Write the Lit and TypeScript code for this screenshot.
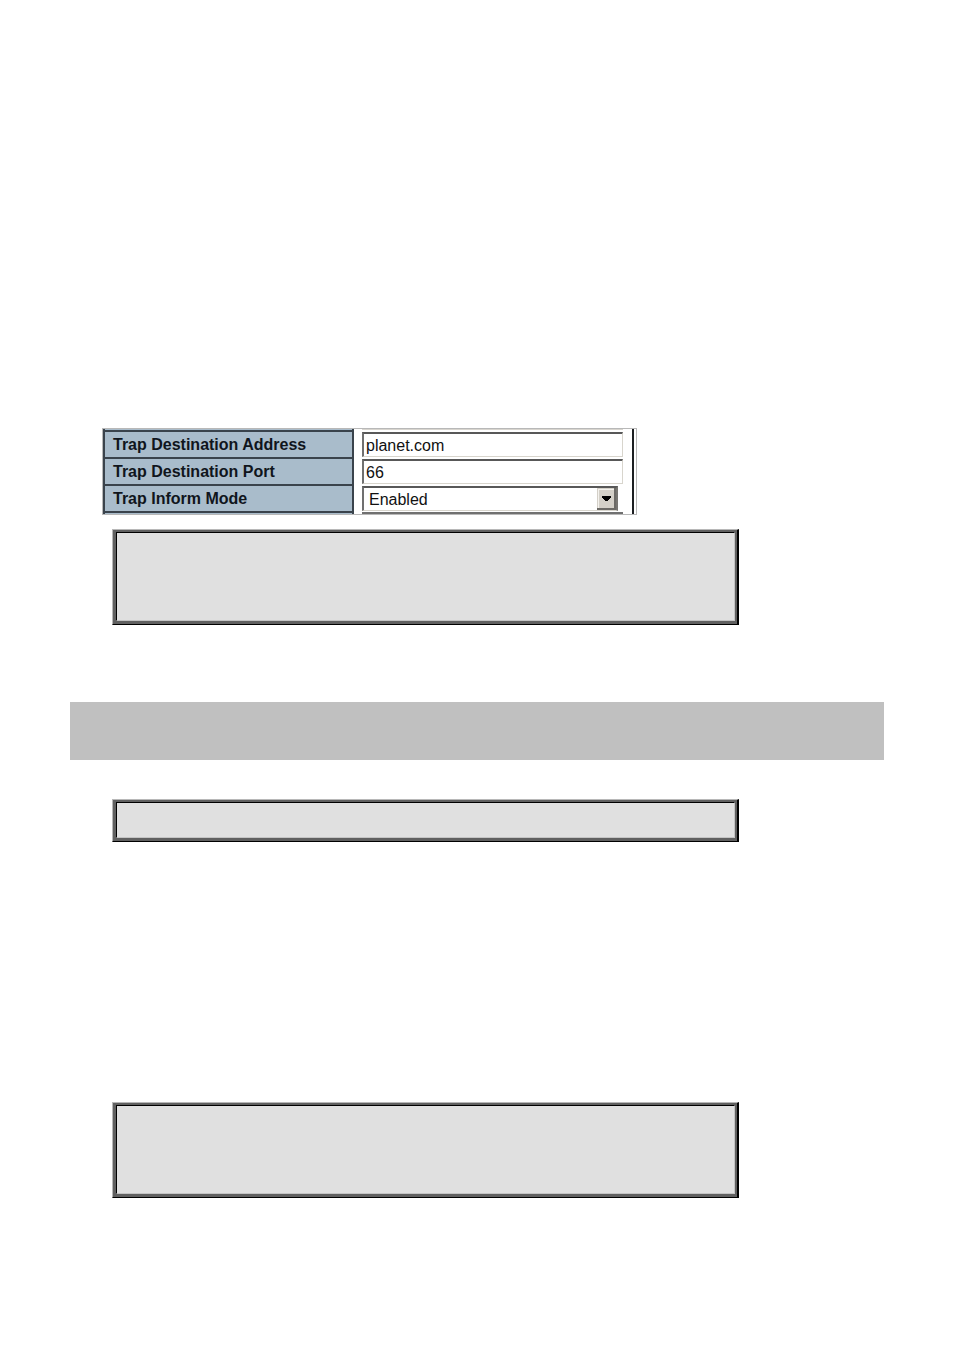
import { LitElement, html, css } from "lit";
import { customElement, property } from "lit/decorators.js";

@customElement("console-box")
class ConsoleBox extends LitElement {
  static styles = css`
    :host {
      display: block;
      box-sizing: border-box;
      margin: 0 145px 0 42px;
      border-style: solid;
      border-width: 1px 2px 1px 1px;
      border-color: #b8b8b8 #000 #000 #b8b8b8;
    }
    .bevel {
      border: solid #606060;
      border-width: 2px 2px 3px 3px;
    }
    .screen {
      background: #e0e0e0;
      border: 1px solid;
      border-color: #000 #c4c4c4 #c4c4c4 #000;
      min-height: 34px;
    }
    :host([tall]) .screen {
      min-height: 87px;
    }
  `;
  @property({ type: Boolean, reflect: true }) tall = false;
  render() {
    return html`<div class="bevel"><div class="screen"></div></div>`;
  }
}

@customElement("trap-form")
class TrapForm extends LitElement {
  static styles = css`
    :host {
      display: block;
    }
    .frame {
      display: flex;
      width: 535px;
      max-width: 100%;
      box-sizing: border-box;
      border: 1px solid #b8b8b8;
      font-family: "Liberation Sans", Arial, sans-serif;
      font-size: 16px;
      color: #000;
      background: #fff;
    }
    .rows {
      flex: 1;
    }
    .row {
      display: grid;
      grid-template-columns: 251px 1fr;
      column-gap: 8px;
      height: 27px;
    }
    .cap {
      height: 1px;
    }
    .tail {
      height: 3px;
    }
    .label {
      box-sizing: border-box;
      padding-left: 8px;
      border: solid #3a434c;
      border-width: 2px 2px 0 2px;
      background: #a9bccb;
      color: #10151c;
      font-weight: bold;
      line-height: 26px;
      white-space: nowrap;
    }
    .cap .label {
      border-top: 0;
    }
    .cell {
      padding-top: 2px;
      min-width: 0;
    }
    .field,
    .picker {
      display: block;
      box-sizing: border-box;
      width: 100%;
      height: 25px;
      margin: 0;
      border: solid;
      border-width: 2px 1px 1px 2px;
      border-color: #585858 #d8d5cd #d8d5cd #707070;
      border-radius: 0;
      outline: 0;
      padding: 2px 2px 0;
      background: #fff;
      color: #111;
      font: inherit;
    }
    .select {
      display: flex;
      position: relative;
      margin-right: 5px;
    }
    .picker {
      appearance: none;
      padding: 1px 22px 0 5px;
      border-right: 2px solid #777571;
    }
    .arrow {
      position: absolute;
      right: 2px;
      top: 2px;
      pointer-events: none;
    }
    .edge {
      height: 1px;
      background: #d8d5cf;
    }
    .next {
      height: 2px;
      margin-top: 1px;
      background: #707070;
    }
    .gutter {
      width: 13px;
      display: flex;
      justify-content: flex-end;
      padding-right: 2px;
      box-sizing: border-box;
    }
    .rule {
      width: 2px;
      background: #1c1f22;
    }
  `;
  render() {
    return html`
      <form class="frame">
        <div class="rows">
          <div class="row cap">
            <div class="label"></div>
            <div class="edge"></div>
          </div>
          <div class="row">
            <label class="label" for="address">Trap Destination Address</label>
            <div class="cell"><input class="field" id="address" type="text" value="planet.com" /></div>
          </div>
          <div class="row">
            <label class="label" for="port">Trap Destination Port</label>
            <div class="cell"><input class="field" id="port" type="text" value="66" /></div>
          </div>
          <div class="row">
            <label class="label" for="inform">Trap Inform Mode</label>
            <div class="cell">
              <div class="select">
                <select class="picker" id="inform">
                  <option>Enabled</option>
                  <option>Disabled</option>
                </select>
                <svg class="arrow" width="19" height="22" viewBox="0 0 19 22" shape-rendering="crispEdges" aria-hidden="true">
                  <path fill="#d4d0c8" d="M0 0h19v22H0z" />
                  <path fill="#f4f2ee" d="M1 1h16v1H2v18H1z" />
                  <path fill="#6c6a66" d="M17 0h2v22H0v-2h17z" />
                  <path fill="#000" d="M5 8h9v2h-1v1h-1v1h-1v1H8v-1H7v-1H6v-1H5z" />
                </svg>
              </div>
            </div>
          </div>
          <div class="row tail">
            <div class="label"></div>
            <div><div class="next"></div></div>
          </div>
        </div>
        <div class="gutter"><div class="rule"></div></div>
      </form>
    `;
  }
}

@customElement("app-root")
class AppRoot extends LitElement {
  static styles = css`
    :host {
      display: block;
      background: #fff;
    }
    .page {
      padding: 428px 70px 152px;
    }
    .form {
      margin: 0 0 14px 32px;
    }
    .band {
      height: 58px;
      margin: 77px 0 39px;
      background: #c0c0c0;
    }
    .last {
      margin-top: 260px;
    }
  `;
  render() {
    return html`
      <main class="page">
        <trap-form class="form"></trap-form>
        <console-box tall></console-box>
        <div class="band"></div>
        <console-box></console-box>
        <console-box class="last" tall></console-box>
      </main>
    `;
  }
}
